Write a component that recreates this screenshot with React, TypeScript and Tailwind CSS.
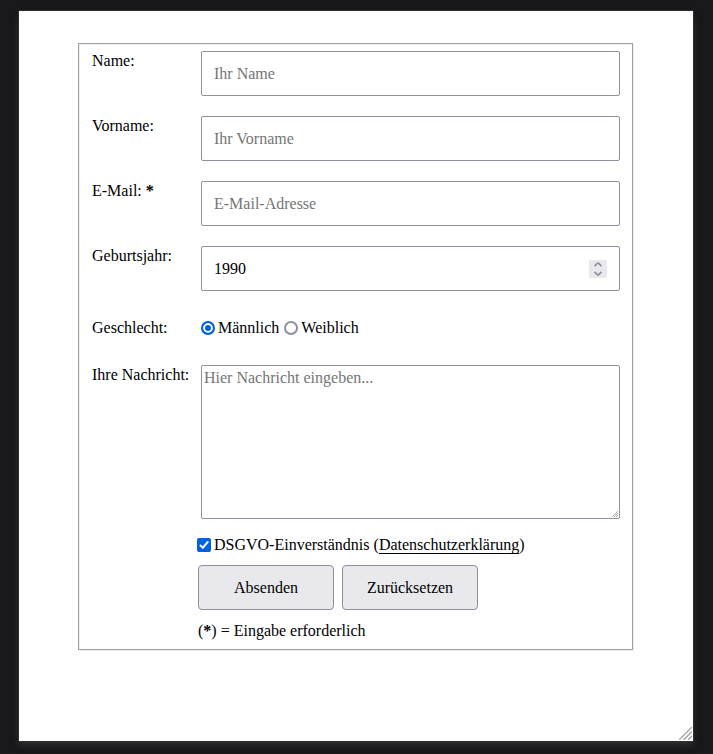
import { useState, type ReactNode } from "react";

const fieldClass =
  "block h-[45px] w-full rounded-[2px] border border-[#8f8f9d] bg-white px-3 text-base text-black placeholder:text-[#757575] placeholder:opacity-100 outline-none";

const buttonClass =
  "h-[45px] w-[136px] rounded-[4px] border border-[#8f8f9d] bg-[#e9e9ed] text-base text-black";

const radioClass =
  "size-[14px] appearance-none rounded-full border-2 border-[#8f8f9d] bg-white checked:border-[#0061e0] checked:bg-[#0061e0] checked:shadow-[inset_0_0_0_2px_#ffffff]";

function Row({ label, htmlFor, children }: { label: ReactNode; htmlFor: string; children: ReactNode }) {
  return (
    <div className="flex">
      <label htmlFor={htmlFor} className="w-[109px] shrink-0 leading-5">
        {label}
      </label>
      <div className="min-w-0 flex-1">{children}</div>
    </div>
  );
}

export default function App() {
  const [year, setYear] = useState(1990);

  return (
    <div
      className="min-h-screen bg-[#19191b] pt-[11px] pr-5 pb-[13px] pl-[19px] text-base leading-[18px] text-black"
      style={{ fontFamily: '"Liberation Serif", "Times New Roman", serif' }}
    >
      <main className="relative bg-white pt-8 pr-[60px] pb-[91px] pl-[59px] shadow-[0_0_0_1px_#2c2c2d,0_4px_6px_#303032]">
        <form onSubmit={(e) => e.preventDefault()}>
          <fieldset className="border border-[#a0a0a0] pt-[7px] pr-3 pb-[9px] pl-[13px] shadow-[1px_1px_0_#eeeeee,inset_1px_1px_0_#eeeeee]">
            <div className="flex flex-col gap-5">
              <Row label="Name:" htmlFor="name">
                <input id="name" type="text" placeholder="Ihr Name" className={fieldClass} />
              </Row>
              <Row label="Vorname:" htmlFor="vorname">
                <input id="vorname" type="text" placeholder="Ihr Vorname" className={fieldClass} />
              </Row>
              <Row
                label={
                  <>
                    E-Mail: <b>*</b>
                  </>
                }
                htmlFor="email"
              >
                <input id="email" type="email" required placeholder="E-Mail-Adresse" className={fieldClass} />
              </Row>
              <Row label="Geburtsjahr:" htmlFor="jahr">
                <div className="relative">
                  <input
                    id="jahr"
                    type="number"
                    value={year}
                    onChange={(e) => setYear(Number(e.target.value))}
                    className={`${fieldClass} [appearance:textfield] [&::-webkit-inner-spin-button]:appearance-none`}
                  />
                  <div className="absolute inset-y-0 right-[13px] flex flex-col justify-center">
                    <button
                      type="button"
                      aria-label="Jahr erhöhen"
                      onClick={() => setYear(year + 1)}
                      className="flex h-[9px] w-[18px] items-center justify-center bg-[#e9e9ed]"
                    >
                      <svg width="8" height="5" viewBox="0 0 8 5" fill="none" stroke="#8f8f9d" strokeWidth="1.8">
                        <path d="M0.6 4.2 3.2 1.4Q4 0.8 4.8 1.4L7.4 4.2" />
                      </svg>
                    </button>
                    <button
                      type="button"
                      aria-label="Jahr verringern"
                      onClick={() => setYear(year - 1)}
                      className="flex h-[9px] w-[18px] items-center justify-center bg-[#e9e9ed]"
                    >
                      <svg width="8" height="5" viewBox="0 0 8 5" fill="none" stroke="#8f8f9d" strokeWidth="1.8">
                        <path d="M0.6 0.8 3.2 3.6Q4 4.2 4.8 3.6L7.4 0.8" />
                      </svg>
                    </button>
                  </div>
                </div>
              </Row>
            </div>

            <div className="mt-7 flex" role="radiogroup" aria-labelledby="geschlecht">
              <span id="geschlecht" className="w-[109px] shrink-0">
                Geschlecht:
              </span>
              <div className="flex gap-[5px]">
                <label className="flex items-center gap-[3px]">
                  <input type="radio" name="geschlecht" defaultChecked className={radioClass} />
                  Männlich
                </label>
                <label className="flex items-center gap-[3px]">
                  <input type="radio" name="geschlecht" className={radioClass} />
                  Weiblich
                </label>
              </div>
            </div>

            <div className="mt-7">
              <Row label="Ihre Nachricht:" htmlFor="nachricht">
                <div className="relative">
                  <textarea
                    id="nachricht"
                    placeholder="Hier Nachricht eingeben..."
                    className="block h-[154px] w-full resize-none rounded-[2px] border border-[#8f8f9d] bg-white px-[2px] py-[3px] text-base leading-[18px] placeholder:text-[#757575] placeholder:opacity-100 outline-none"
                  />
                  <svg
                    className="pointer-events-none absolute right-[2px] bottom-[2px]"
                    width="6"
                    height="6"
                    viewBox="0 0 6 6"
                    stroke="#b0b0b0"
                  >
                    <path d="M0 6 6 0M2 6 6 2M4 6 6 4" />
                  </svg>
                </div>
              </Row>
            </div>

            <div className="mt-[17px] ml-[105px] flex items-center">
              <input
                id="dsgvo"
                type="checkbox"
                defaultChecked
                className="peer size-[14px] appearance-none rounded-[2px] border-2 border-[#8f8f9d] bg-white checked:border-[#0061e0] checked:bg-[#0061e0]"
              />
              <svg
                className="pointer-events-none -ml-[14px] opacity-0 peer-checked:opacity-100"
                width="14"
                height="14"
                viewBox="0 0 14 14"
                fill="none"
                stroke="#ffffff"
                strokeWidth="2"
                strokeLinecap="round"
                strokeLinejoin="round"
              >
                <path d="M3.5 7.5 5.8 9.8 10.7 4" />
              </svg>
              <label htmlFor="dsgvo" className="ml-[3px]">
                DSGVO-Einverständnis (
                <a href="#datenschutz" className="underline underline-offset-[3px]">
                  Datenschutzerklärung
                </a>
                )
              </label>
            </div>

            <div className="mt-[11px] ml-[106px] flex gap-2">
              <button type="submit" className={buttonClass}>
                Absenden
              </button>
              <button type="reset" className={buttonClass}>
                Zurücksetzen
              </button>
            </div>
            <p className="mt-3 ml-[106px]">
              (<b>*</b>) = Eingabe erforderlich
            </p>
          </fieldset>
        </form>

        <svg
          className="absolute right-[1px] bottom-[1px]"
          width="13"
          height="13"
          viewBox="0 0 13 13"
          stroke="#999999"
          strokeWidth="1.2"
        >
          <path d="M0 13 13 0M4.5 13 13 4.5M9 13 13 9" />
        </svg>
      </main>
    </div>
  );
}
